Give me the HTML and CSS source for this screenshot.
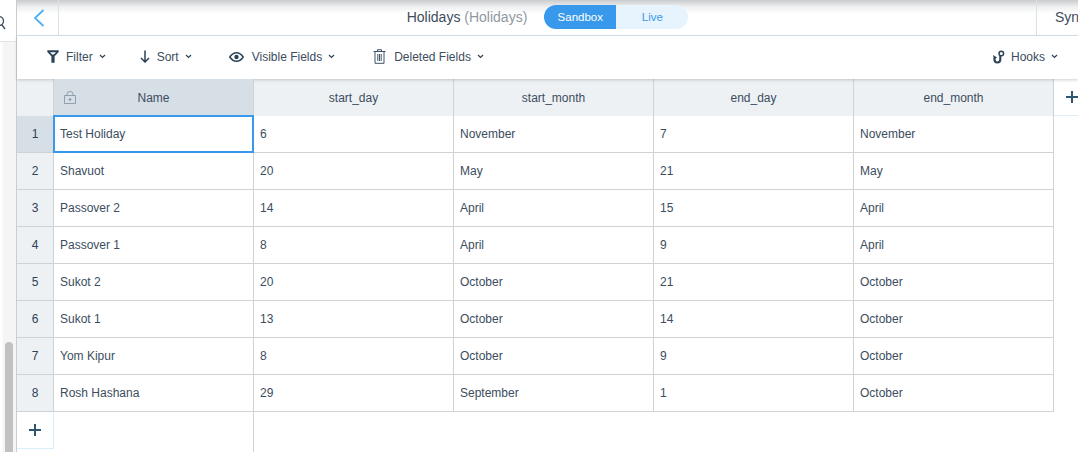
FILE: index.html
```html
<!DOCTYPE html>
<html lang="en">
<head>
  <meta charset="UTF-8" />
  <title>Holidays</title>
  <link rel="stylesheet" href="styles.css">
</head>
<body>
  <aside class="side">
    <svg class="search" width="6" height="16" viewBox="0 0 6 16"><circle cx="-1" cy="6" r="4.5" fill="none" stroke="#3b4a57" stroke-width="1.3"/><path d="M2 10l3 4" stroke="#3b4a57" stroke-width="1.3" fill="none"/></svg>
    <div class="scroll-track"><div class="scroll-thumb"></div></div>
  </aside>

  <main class="main">
    <header class="topbar">
      <div class="back">
        <svg width="14" height="18" viewBox="0 0 14 18"><path d="M11.5 1L3 9l8.500 8" fill="none" stroke="#4eb0f0" stroke-width="1.800"/></svg>
      </div>
      <div class="title-area">
        <span class="title">Holidays <span class="title-sub">(Holidays)</span></span>
        <div class="toggle">
          <span class="toggle-on">Sandbox</span>
          <span class="toggle-off">Live</span>
        </div>
      </div>
      <div class="sync">Syn</div>
    </header>

    <nav class="toolbar">
      <span class="tool tool-filter">
        <svg width="12" height="13" viewBox="0 0 12 13"><path d="M0.300 0.300h11.400v1.700L7.600 6.200V12.700H4.400V6.200L0.300 2z" fill="#2b4257"/><path d="M3 2.300h6L6.800 4.600H5.200z" fill="#fff"/></svg>
        Filter <svg class="chev" width="7" height="5" viewBox="0 0 7 5"><path d="M1 1l2.500 2.500L6 1" fill="none" stroke="#2b4257" stroke-width="1.200"/></svg>
      </span>
      <span class="tool tool-sort">
        <svg width="10" height="13" viewBox="0 0 10 13"><path d="M5 0.500V12M1 8l4 4 4-4" fill="none" stroke="#2b4257" stroke-width="1.500"/></svg>
        Sort <svg class="chev" width="7" height="5" viewBox="0 0 7 5"><path d="M1 1l2.500 2.500L6 1" fill="none" stroke="#2b4257" stroke-width="1.200"/></svg>
      </span>
      <span class="tool tool-visible">
        <svg width="15" height="10" viewBox="0 0 15 10"><path d="M0.800 5C3 1.800 5 0.800 7.500 0.800S12 1.800 14.200 5C12 8.200 10 9.200 7.500 9.200S3 8.200 0.800 5z" fill="none" stroke="#2b4257" stroke-width="1.500"/><circle cx="7.500" cy="5" r="2.200" fill="#2b4257"/></svg>
        Visible Fields <svg class="chev" width="7" height="5" viewBox="0 0 7 5"><path d="M1 1l2.500 2.500L6 1" fill="none" stroke="#2b4257" stroke-width="1.200"/></svg>
      </span>
      <span class="tool tool-deleted">
        <svg width="13" height="15" viewBox="0 0 13 15"><path d="M0.500 2.500h12M4.500 2.500V0.700h4v1.800M2 2.500v11.800h9V2.500M4.800 5v7M6.500 5v7M8.200 5v7" fill="none" stroke="#2b4257" stroke-width="0.900"/></svg>
        Deleted Fields <svg class="chev" width="7" height="5" viewBox="0 0 7 5"><path d="M1 1l2.500 2.500L6 1" fill="none" stroke="#2b4257" stroke-width="1.200"/></svg>
      </span>
      <span class="tool tool-hooks">
        <svg width="12" height="14" viewBox="0 0 12 14"><circle cx="8.300" cy="3.500" r="2.300" fill="none" stroke="#2b4257" stroke-width="1.500"/><path d="M7.300 5.500V9.600a2.900 2.900 0 0 1-5.800 0V8" fill="none" stroke="#2b4257" stroke-width="2.100"/><path d="M0 5l4 2.600L1 9.800z" fill="#2b4257"/></svg>
        Hooks <svg class="chev" width="7" height="5" viewBox="0 0 7 5"><path d="M1 1l2.500 2.500L6 1" fill="none" stroke="#2b4257" stroke-width="1.200"/></svg>
      </span>
    </nav>

    <div class="sheet">
      <div class="row row-head">
        <div class="num num-head"></div>
        <div class="cell head head-name">
          <svg class="lock" width="12" height="13" viewBox="0 0 12 13"><path d="M0.500 4.500h11v8h-11zM3 4.500V3a3 2.500 0 0 1 6 0v1.500M6 6.800v3.400M4.300 8.500h3.400" fill="none" stroke="#7d8fa0" stroke-width="0.800"/></svg>
          Name
        </div>
        <div class="cell head wide">start_day</div>
        <div class="cell head wide">start_month</div>
        <div class="cell head wide">end_day</div>
        <div class="cell head wide">end_month</div>
        <div class="add-col"><svg width="12" height="12" viewBox="0 0 12 12"><path d="M6 0v12M0 6h12" stroke="#2b5570" stroke-width="2"/></svg></div>
      </div>

      <div class="row">
        <div class="num num-active">1</div>
        <div class="cell name selected">Test Holiday</div>
        <div class="cell wide">6</div><div class="cell wide">November</div><div class="cell wide">7</div><div class="cell wide">November</div>
      </div>
      <div class="row">
        <div class="num">2</div>
        <div class="cell name">Shavuot</div>
        <div class="cell wide">20</div><div class="cell wide">May</div><div class="cell wide">21</div><div class="cell wide">May</div>
      </div>
      <div class="row">
        <div class="num">3</div>
        <div class="cell name">Passover 2</div>
        <div class="cell wide">14</div><div class="cell wide">April</div><div class="cell wide">15</div><div class="cell wide">April</div>
      </div>
      <div class="row">
        <div class="num">4</div>
        <div class="cell name">Passover 1</div>
        <div class="cell wide">8</div><div class="cell wide">April</div><div class="cell wide">9</div><div class="cell wide">April</div>
      </div>
      <div class="row">
        <div class="num">5</div>
        <div class="cell name">Sukot 2</div>
        <div class="cell wide">20</div><div class="cell wide">October</div><div class="cell wide">21</div><div class="cell wide">October</div>
      </div>
      <div class="row">
        <div class="num">6</div>
        <div class="cell name">Sukot 1</div>
        <div class="cell wide">13</div><div class="cell wide">October</div><div class="cell wide">14</div><div class="cell wide">October</div>
      </div>
      <div class="row">
        <div class="num">7</div>
        <div class="cell name">Yom Kipur</div>
        <div class="cell wide">8</div><div class="cell wide">October</div><div class="cell wide">9</div><div class="cell wide">October</div>
      </div>
      <div class="row">
        <div class="num">8</div>
        <div class="cell name">Rosh Hashana</div>
        <div class="cell wide">29</div><div class="cell wide">September</div><div class="cell wide">1</div><div class="cell wide">October</div>
      </div>

      <div class="row-add">
        <div class="add-row"><svg width="12" height="12" viewBox="0 0 12 12"><path d="M6 0v12M0 6h12" stroke="#2b5570" stroke-width="2"/></svg></div>
        <div class="add-rest"></div>
      </div>
    </div>
  </main>
</body>
</html>
```

FILE: styles.css
```css
/* Reset */
*, *::before, *::after {
  margin: 0;
  padding: 0;
  box-sizing: border-box;
}

html, body {
  height: 452px;
  width: 1078px;
  overflow: hidden;
}

body {
  display: flex;
  font-family: 'Liberation Sans', Arial, sans-serif;
  font-size: 12px;
  color: #2b4257;
  background: #fff;
}

/* left sliver of the neighbouring panel */
.side {
  width: 17px;
  flex: none;
  background: #fff;
  border-right: 1px solid #c9ccd0;
  display: flex;
  flex-direction: column;
}

.search {
  display: block;
  margin-top: 15px;
}

.scroll-track {
  margin-top: 10px;
  flex: 1;
  display: flex;
  flex-direction: column;
  justify-content: flex-end;
  padding-left: 5px;
  border-top: 1px solid #dfe3e6;
  background: linear-gradient(to right, #fff 2px, #f5f5f5 3px);
}

.scroll-thumb {
  width: 8px;
  height: 110px;
  background: #c1c1c1;
  border-radius: 4px 4px 0 0;
}

.main {
  flex: 1;
  min-width: 0;
  display: flex;
  flex-direction: column;
}

.topbar {
  height: 36px;
  flex: none;
  display: flex;
  border-bottom: 1px solid #d8e2e9;
  background: linear-gradient(to bottom, #c9cbce 0, #eff0f1 7px, #fff 14px);
}

.back {
  width: 42px;
  flex: none;
  display: flex;
  align-items: center;
  padding-left: 15px;
  border-right: 1px solid #d8e2e9;
}

.title-area {
  flex: 1;
  display: flex;
  align-items: center;
  justify-content: center;
  gap: 17px;
  padding-bottom: 2px;
}

.title {
  font-size: 14px;
  color: #3b4d5e;
}

.title-sub {
  color: #8f989f;
}

.toggle {
  display: flex;
  height: 24px;
  width: 144px;
  font-size: 11.5px;
  border-radius: 12px;
  overflow: hidden;
}

.toggle span {
  width: 72px;
  display: flex;
  align-items: center;
  justify-content: center;
}

.toggle-on {
  background: #3899ec;
  color: #fff;
}

.toggle-off {
  background: #e7f4fd;
  color: #3899ec;
}

.sync {
  width: 42px;
  flex: none;
  padding: 9px 0 0 18px;
  font-size: 14px;
  overflow: hidden;
  white-space: nowrap;
  border-left: 1px solid #d8e2e9;
  color: #3b4d5e;
}

.toolbar {
  height: 43px;
  flex: none;
  display: flex;
  align-items: center;
  padding: 0 20px 2px 30px;
  background: #fff;
  font-size: 12px;
  box-shadow: 0 1px 3px rgba(90, 100, 110, 0.3);
  position: relative;
}

.tool {
  display: flex;
  align-items: center;
  gap: 7px;
  color: #3b4d5e;
}

.chev {
  margin-left: -1px;
}

.tool-sort { margin-left: 34px; }
.tool-visible { margin-left: 37px; }
.tool-visible svg:first-child { margin-right: 1px; }
.tool-deleted { margin-left: 38px; }
.tool-deleted svg:first-child { margin-right: 1px; }
.tool-hooks { margin-left: auto; }
.tool-hooks svg:first-child { margin-right: -1px; }

.sheet {
  flex: 1;
  min-height: 0;
  display: flex;
  flex-direction: column;
}

.row {
  display: flex;
  height: 37px;
  flex: none;
}

.row-head {
  height: 37px;
}

.num {
  width: 37px;
  flex: none;
  display: flex;
  align-items: center;
  justify-content: center;
  background: #eef1f4;
  border-right: 1px solid #cfd3d6;
  border-bottom: 1px solid #cfd3d6;
}

.num-head {
  border-bottom: none;
}

.num-active {
  background: #d6dfe6;
}

.cell {
  flex: none;
  display: flex;
  align-items: center;
  padding-left: 6px;
  border-right: 1px solid #cfd3d6;
  border-bottom: 1px solid #cfd3d6;
  color: #3b4d5e;
}

.name {
  width: 200px;
}

.wide {
  width: 200px;
}

.head {
  justify-content: center;
  padding-left: 0;
  background: #eef1f4;
  border-bottom: none;
}

.head-name {
  width: 200px;
  background: #d6dfe6;
  position: relative;
}

.lock {
  position: absolute;
  left: 10px;
  top: 12px;
}

.selected {
  border: 2px solid #3899ec;
  padding-left: 5px;
  margin: -1px 0 0 -1px;
  width: 201px;
  height: 38px;
  position: relative;
  z-index: 1;
}

.add-col {
  width: 24px;
  flex: none;
  display: flex;
  align-items: center;
  padding-left: 12px;
  border-bottom: 1px solid #daeefc;
}

.row-add {
  display: flex;
  flex: 1;
}

.add-row {
  width: 37px;
  height: 37px;
  flex: none;
  display: flex;
  align-items: center;
  justify-content: center;
  border-right: 1px solid #daeefc;
  border-bottom: 1px solid #daeefc;
}

.add-rest {
  width: 200px;
  flex: none;
  border-right: 1px solid #cfd3d6;
}
```
